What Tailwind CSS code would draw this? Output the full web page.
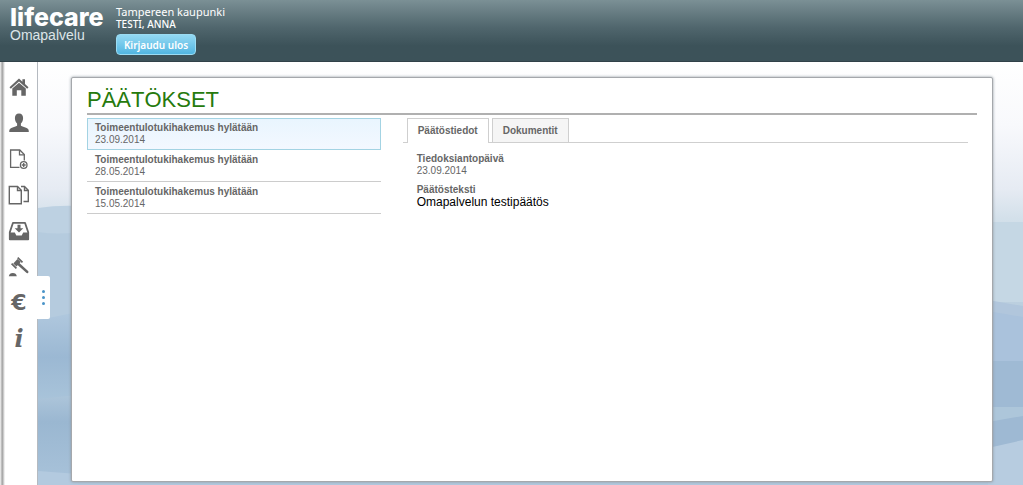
<!DOCTYPE html>
<html lang="fi">
<head>
<meta charset="utf-8">
<meta name="viewport" content="width=device-width, initial-scale=1">
<title>Lifecare Omapalvelu – Päätökset</title>
<script src="https://cdn.jsdelivr.net/npm/@tailwindcss/browser@4"></script>
</head>
<body class="flex min-h-screen flex-col bg-white font-['Liberation_Sans',Arial,sans-serif] text-[10px] leading-[12px] text-[#666666]">

<header class="flex h-[62px] shrink-0 gap-3 border-b border-[#314249] bg-linear-to-b from-[#7b9095] via-[#50666d] via-45% to-[#3c5259] to-75% pl-[10px] text-white">
  <div class="w-[94px] pt-[6px]">
    <div class="font-['Inter','Liberation_Sans',sans-serif] text-[25px] leading-[22px] font-extrabold">lifecare</div>
    <div class="text-[14px] leading-[14px] text-[#dde5e8]">Omapalvelu</div>
  </div>
  <div class="pt-[6px] font-['Noto_Sans',sans-serif] leading-[12px]">
    <div class="text-[11px]">Tampereen kaupunki</div>
    <div class="text-[10px] font-medium">TESTI, ANNA</div>
    <button type="button" class="mt-1 h-[21px] w-[80px] rounded-[4px] border border-[#9bdcf3] bg-linear-to-b from-[#93d9f3] to-[#51b6e1] text-[10px] leading-[16px] font-semibold">Kirjaudu ulos</button>
  </div>
</header>

<div class="flex grow">
  <nav aria-label="Päävalikko" class="relative z-10 w-[38px] shrink-0 border-r border-[#b5bac0] bg-linear-to-r from-[#e4e4e4] from-[1px] via-[#999999] via-[2px] to-white to-[5px]">
    <div class="flex flex-col items-center pt-[7px] pl-[1px] text-[#666666]">
      <a href="#" aria-label="Etusivu" class="flex h-9 items-center"><svg class="size-[22px]" viewBox="0 0 22 22" fill="currentColor"><path d="M1.500 11.300 11 2.600l3.400 3.100V3.300h2.600v4.800l3.500 3.200-1.300 1.500L11 5.500l-8.200 7.300z"/><path d="M4.300 12.500 11 6.700l6.800 5.800v7.300h-4.500v-5.600H8.800v5.600H4.300z"/></svg></a>
      <a href="#" aria-label="Omat tiedot" class="flex h-9 items-center"><svg class="size-[22px]" viewBox="0 0 22 22" fill="currentColor"><path d="M11 1.500c2.700 0 4.100 1.800 4.100 4.500 0 2.300-.9 4.400-2.200 5.500v2.200c1.800 1.300 5.900 1.600 7.200 3.300.6.800.7 1.800.7 3H1.200c0-1.200.1-2.200.7-3 1.300-1.700 5.400-2 7.200-3.300v-2.200C7.800 10.400 6.900 8.300 6.900 6c0-2.700 1.400-4.500 4.100-4.500z"/></svg></a>
      <a href="#" aria-label="Uusi hakemus" class="flex h-9 items-center"><svg class="size-[22px]" viewBox="0 0 22 22" fill="none" stroke="currentColor" stroke-width="1.300"><path d="M11.500 19.300H2.600V2h9.200l4.500 4.500v6"/><path d="M11.500 2v4.800h4.800"/><circle cx="15.700" cy="17" r="3.300"/><path d="M15.700 15v4M13.700 17h4"/></svg></a>
      <a href="#" aria-label="Hakemukset" class="flex h-9 items-center"><svg class="size-[22px]" viewBox="0 0 22 22" fill="none" stroke="currentColor" stroke-width="1.400"><path d="M1.300 2.500h8.200l3.800 3.800v13.400h-12z"/><path d="M9.500 2.500v4h3.800M13 2.500h3.500l3.800 3.800v11.200h-4.800M16.500 2.500v4h3.800"/></svg></a>
      <a href="#" aria-label="Saapuneet" class="flex h-9 items-center"><svg class="size-[22px]" viewBox="0 0 22 22" fill="none" stroke="currentColor"><path stroke-width="1.800" stroke-linejoin="round" d="M5 2.800h12l3.200 9.500v7H1.800v-7z"/><path fill="currentColor" stroke="none" d="M1.500 12.500h5.300l1.500 3h5.400l1.500-3h5.300v7h-19zM9.500 4.800h3v3.400h2.800L11 12.500 6.700 8.200h2.800z"/></svg></a>
      <a href="#" aria-label="Päätökset" class="flex h-9 items-center"><svg class="size-[22px]" viewBox="0 0 22 22" fill="none" stroke="currentColor"><path stroke-width="4.400" d="m6.900 8.900 4.200-4.400"/><path stroke-width="1.700" d="m3.600 7.600 4.800 4.800M9.700 1.600l4.800 4.800"/><path stroke-width="2.600" stroke-linecap="round" d="m10.500 8 8.700 7.900"/><path fill="currentColor" stroke="none" d="M.8 20.300c.5-2.500 1.700-3.400 4-3.400s3.500.9 4 3.400z"/></svg></a>
      <a href="#" aria-label="Maksut" class="flex h-9 items-center font-['DejaVu_Sans',sans-serif] text-[22px] leading-[36px] font-bold">€</a>
      <a href="#" aria-label="Tietoa" class="flex h-9 items-center font-['DejaVu_Serif',serif] text-[24px] leading-[36px] font-bold italic">i</a>
    </div>
    <button type="button" aria-label="Laajenna valikko" class="absolute top-[214px] left-[37px] flex h-[43px] w-[13px] flex-col items-center justify-center gap-[3px] rounded-r-[2px] bg-white">
      <span class="size-[3px] rounded-full bg-[#4a94c8]"></span>
      <span class="size-[3px] rounded-full bg-[#4a94c8]"></span>
      <span class="size-[3px] rounded-full bg-[#4a94c8]"></span>
    </button>
  </nav>

  <div class="relative flex min-w-0 grow pt-[15px] pr-[30px] pb-[3px] pl-[33px]">
    <!-- misty hills behind the content card -->
    <svg class="absolute inset-0 size-full" viewBox="0 0 985 423" preserveAspectRatio="none" aria-hidden="true">
      <defs>
        <linearGradient id="sky" x1="0" y1="0" x2="0" y2="1"><stop offset="0" stop-color="#fff"/><stop offset=".15" stop-color="#f8f9fc"/><stop offset=".3" stop-color="#e6ebf3"/><stop offset=".37" stop-color="#d3e0ea"/><stop offset=".5" stop-color="#bdd0df"/><stop offset="1" stop-color="#b2c9de"/></linearGradient>
        <linearGradient id="hillA" x1="0" y1="0" x2="0" y2="1"><stop offset="0" stop-color="#b0c8de"/><stop offset=".5" stop-color="#9bb8d3"/><stop offset="1" stop-color="#a9c4da"/></linearGradient>
        <linearGradient id="hillB" x1="0" y1="0" x2="0" y2="1"><stop offset="0" stop-color="#adc5da"/><stop offset=".3" stop-color="#9ab7d1"/><stop offset="1" stop-color="#a9c3da"/></linearGradient>
      </defs>
      <path fill="url(#sky)" d="M0 0h985v423H0z"/>
      <path fill="#bdd1e2" d="M0 146q20-3 40-2v110H0z"/>
      <path fill="#b5cbde" d="M0 170q20 3 40 0v90H0z"/>
      <path fill="url(#hillA)" d="M0 258 40 250v90H0z"/>
      <path fill="url(#hillB)" d="M0 337l40-4v90H0z"/>
      <path fill="#b3cadf" d="M0 409l40 3v11H0z"/>
      <path fill="#c5d7e4" d="M950 160h35v80h-35z"/>
      <path fill="#b1c6dc" d="M950 238l35 6v60h-35z"/>
      <path fill="#aac2dc" d="M950 249l35 6v50h-35z"/>
      <path fill="#9fbad4" d="M950 299h35v50h-35z"/>
      <path fill="#adc6da" d="M950 345h35v15h-35z"/>
      <path fill="#9eb9d3" d="M950 360l35-6v50h-35z"/>
      <path fill="#b7cce0" d="M950 386l35-8v45h-35z"/>
    </svg>

    <main class="relative min-w-0 grow rounded-[2px] border border-[#a5a8ac] bg-white px-[15px] pt-[9px] shadow-[0_0_3px_#8d969f]">
      <h1 class="border-b-2 border-[#b0b0b0] pb-px text-[22px] leading-[25px] text-[#267a0d]">PÄÄTÖKSET</h1>

      <div class="mt-[3px] flex">
        <ul class="w-[33%] shrink-0">
          <li><a href="#" aria-current="true" class="block border border-[#a3d3e3] bg-linear-to-b from-[#e9f5fe] to-[#f3f8ff] px-[7px] pt-[3px] pb-[3px]"><b class="block">Toimeentulotukihakemus hylätään</b><span class="block">23.09.2014</span></a></li>
          <li><a href="#" class="block border-b border-[#cccccc] px-2 pt-1 pb-[3px]"><b class="block">Toimeentulotukihakemus hylätään</b><span class="block">28.05.2014</span></a></li>
          <li><a href="#" class="block border-b border-[#cccccc] px-2 pt-1 pb-[3px]"><b class="block">Toimeentulotukihakemus hylätään</b><span class="block">15.05.2014</span></a></li>
        </ul>

        <section class="mr-[9px] ml-[22px] min-w-0 grow">
          <div role="tablist" class="flex gap-[3px] border-b border-[#cfcfcf] pl-1">
            <button type="button" role="tab" aria-selected="true" class="-mb-px h-[25px] border border-b-0 border-[#cfcfcf] bg-white px-[10px] font-bold whitespace-nowrap">Päätöstiedot</button>
            <button type="button" role="tab" aria-selected="false" class="h-[24px] border border-b-0 border-[#cfcfcf] bg-[#f5f5f5] px-[10px] font-bold whitespace-nowrap">Dokumentit</button>
          </div>
          <dl class="px-[14px] pt-[10px]">
            <dt class="font-bold">Tiedoksiantopäivä</dt>
            <dd>23.09.2014</dd>
            <dt class="mt-[7px] font-bold">Päätösteksti</dt>
            <dd class="text-[12px] leading-[13px] text-black">Omapalvelun testipäätös</dd>
          </dl>
        </section>
      </div>
    </main>
  </div>
</div>
</body>
</html>
